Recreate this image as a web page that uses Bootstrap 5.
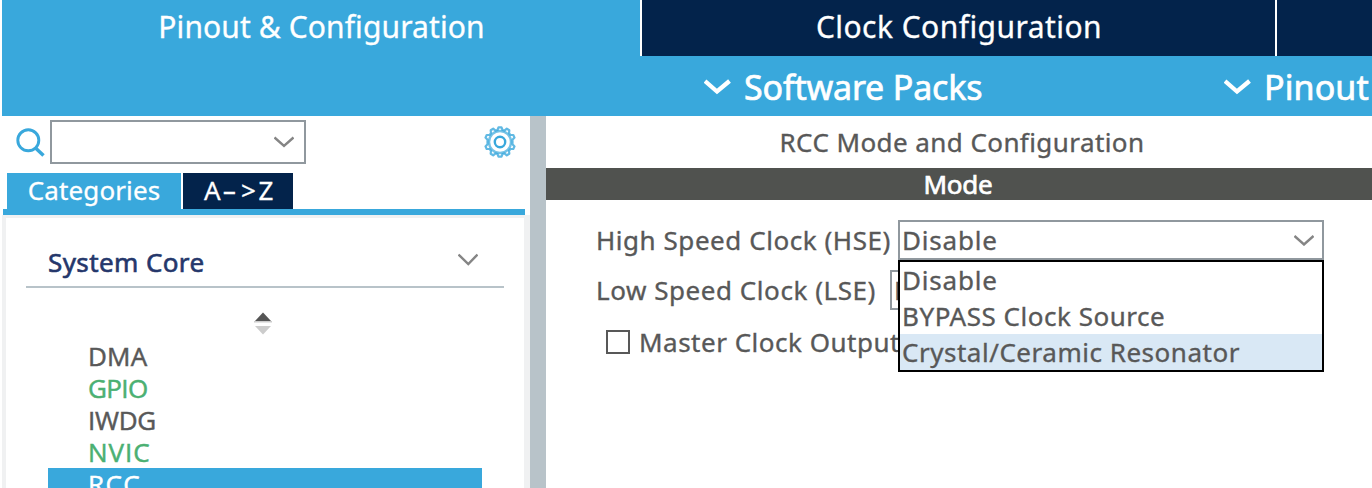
<!DOCTYPE html>
<html lang="en">
<head>
<meta charset="utf-8">
<title>Pinout &amp; Configuration</title>
<link href="https://cdn.jsdelivr.net/npm/bootstrap@5.3.0/dist/css/bootstrap.min.css" rel="stylesheet">
<style>
:root{--sky:#39a8dc;--navy:#03234b;--ink:#585858;--steel:#b8c3c9;--edge:#90989e}
body{height:488px;font-family:"Noto Sans","Open Sans",sans-serif;font-size:26px;line-height:32px;letter-spacing:.55px;color:var(--ink);background:#fff;white-space:nowrap;-webkit-text-stroke:.35px}
svg{display:block;flex:none}
.page{height:488px;padding-left:2px}
.main-tabs{height:56px;font-size:30px;background:var(--navy)}
.main-tab{padding-bottom:2px;padding-left:1px;background:var(--navy);color:#fff;-webkit-text-stroke:.3px}
.main-tab.active{width:638px;background:var(--sky);letter-spacing:.1px}
.main-tab.clock{width:637px;margin-right:-1px;letter-spacing:.45px;border:solid #fff;border-width:0 2px}
.tool-bar{height:60px;background:var(--sky);color:#fff;font-size:34px;-webkit-text-stroke:.7px}
.tool-item{height:60px;padding-top:2px}
.tool-item svg{margin-top:0;margin-right:13px}
.tool-item.packs{margin-left:702px;width:520px;letter-spacing:-.18px}
.tool-item.pins{letter-spacing:.1px}
.side{width:528px}
.splitter{width:16px;background:var(--steel)}
.search-row{height:57px;padding:4px 14px 9px 14px}
.combo{border:2px solid var(--edge);background:#fff}
.search-combo{width:256px;height:44px;margin-left:5px;padding-right:10px}
.cat-tabs{height:36px;padding-left:5px;gap:2px}
.cat-tab{height:36px;padding-bottom:3px;background:var(--navy);color:#fff;-webkit-text-stroke:.3px}
.cat-tab.active{width:174px;background:var(--sky);letter-spacing:.12px}
.cat-tab.az{width:110px;letter-spacing:2.6px;padding-left:4px}
.dash{display:inline-block;transform:scaleX(1.7);margin:0 4.6px 0 2.4px}
.cat-line{height:6px;width:522px;margin-left:1px;background:var(--sky)}
.cat-panel{border:solid #f0f1f2;border-width:3px 6px 0 4px;padding:19px 20px 0}
.group-head{height:51px;border-bottom:2px solid var(--steel);padding:1px 26px 0 22px;color:#25376b;letter-spacing:.4px;-webkit-text-stroke:.6px}
.group-head svg{margin-top:-6px}
.sorter{height:52px;padding-top:24px;padding-right:4px}
.periph{margin:0 22px;font-family:"Open Sans","Noto Sans",sans-serif;-webkit-text-stroke:.5px}
.periph-item{height:32px;padding-left:40px}
.periph-item.ok{color:#4bb072}
.periph-item.picked{background:var(--sky);color:#fff;letter-spacing:1.4px}
.pane-title{height:52px;letter-spacing:.42px;padding-left:6px}
.pane-bar{height:32px;background:#50524f;color:#fff;letter-spacing:-.2px;padding-right:2px;-webkit-text-stroke:.7px}
.form-area{padding:20px 0 0 50px}
.form-stack{width:728px}
.form-line{height:40px}
.select-box{width:426px;height:40px;padding:0 8px 0 2px;letter-spacing:.8px}
.low-speed{width:720px;margin-top:10px}
.master{margin-top:12px;letter-spacing:.5px}
.drop{top:40px;right:0;width:426px;z-index:5;background:#fff;border:2px solid #000;letter-spacing:.52px}
.opt{height:36px;padding-left:2px}
.opt.hot{background:#d9e8f5}
.box{width:24px;height:24px;border:2px solid var(--ink);margin-left:10px;margin-right:9px}
</style>
</head>
<body class="overflow-hidden">
<div class="page d-flex flex-column overflow-hidden">
  <nav class="main-tabs d-flex flex-shrink-0">
    <div class="main-tab active d-flex align-items-center justify-content-center">Pinout &amp; Configuration</div>
    <div class="main-tab clock d-flex align-items-center justify-content-center">Clock Configuration</div>
  </nav>
  <div class="tool-bar d-flex flex-shrink-0">
    <div class="tool-item packs d-flex align-items-center">
      <svg width="27" height="16" viewBox="0 0 27 16" fill="none" stroke="#fff" stroke-width="4.300"><path d="M1 2 13 12.500 25.500 2"/></svg>
      <span>Software Packs</span>
    </div>
    <div class="tool-item pins d-flex align-items-center">
      <svg width="27" height="16" viewBox="0 0 27 16" fill="none" stroke="#fff" stroke-width="4.300"><path d="M1 2 13 12.500 25.500 2"/></svg>
      <span>Pinout</span>
    </div>
  </div>
  <div class="d-flex flex-grow-1">
    <aside class="side d-flex flex-column flex-shrink-0">
      <div class="search-row d-flex align-items-center">
        <svg width="29" height="29" viewBox="0 0 29 29" fill="none" stroke="#39a8dc"><circle cx="12.300" cy="12.300" r="10.500" stroke-width="2.900"/><path d="M19 19.500 27.500 27.500" stroke-width="3.500"/></svg>
        <div class="search-combo combo d-flex align-items-center justify-content-end">
          <svg width="20" height="12" viewBox="0 0 20 12" fill="none" stroke="#858585" stroke-width="2.400"><path d="M.5 1.500 10 10 19.500 1.500"/></svg>
        </div>
        <svg class="ms-auto" width="32" height="32" viewBox="0 0 32 32" fill="none" stroke="#39a8dc"><circle cx="16" cy="16" r="5.200" stroke-width="2.400"/><circle cx="16" cy="16" r="11" stroke-width="2.400" stroke-opacity=".7"/><path stroke-width="2.200" stroke-opacity=".8" stroke-linejoin="round" d="M13.500 4 14.500 1.300h3L18.500 4 20.500 4.600 22.800 2.700 25.300 4.300 25 7.300 26.400 9 29.300 9 30.500 11.600 28.500 13.800 28.500 18.200 30.500 20.400 29.300 23 26.400 23 25 24.700 25.300 27.700 22.800 29.300 20.500 27.400 18.500 28 17.500 30.700h-3L13.500 28 11.500 27.400 9.200 29.300 6.700 27.700 7 24.700 5.600 23 2.700 23 1.500 20.400 3.500 18.200 3.500 13.800 1.500 11.600 2.700 9 5.600 9 7 7.300 6.700 4.300 9.200 2.700 11.500 4.600z"/></svg>
      </div>
      <div class="cat-tabs d-flex">
        <div class="cat-tab active d-flex align-items-center justify-content-center">Categories</div>
        <div class="cat-tab az d-flex align-items-center justify-content-center"><span>A<span class="dash">-</span>&gt;Z</span></div>
      </div>
      <div class="cat-line flex-shrink-0"></div>
      <div class="cat-panel flex-grow-1">
        <div class="group-head d-flex align-items-center justify-content-between">
          <span>System Core</span>
          <svg width="20" height="13" viewBox="0 0 20 13" fill="none" stroke="#858585" stroke-width="2.400"><path d="M.5 1.500 10.300 11 19.500 1.500"/></svg>
        </div>
        <div class="sorter d-flex justify-content-center">
          <svg width="18" height="24" viewBox="0 0 18 24"><path d="M9 .5 17 9H1z" fill="#555"/><path d="M0 9h18v1.500H0z" fill="#ccc"/><path d="M1 14h16L9 22.500z" fill="#ccc"/></svg>
        </div>
        <ul class="periph list-unstyled mb-0">
          <li class="periph-item" style="letter-spacing:.2px">DMA</li>
          <li class="periph-item ok" style="letter-spacing:-.6px">GPIO</li>
          <li class="periph-item" style="letter-spacing:-.3px">IWDG</li>
          <li class="periph-item ok" style="letter-spacing:1px">NVIC</li>
          <li class="periph-item picked">RCC</li>
        </ul>
      </div>
    </aside>
    <div class="splitter flex-shrink-0"></div>
    <main class="flex-grow-1">
      <div class="pane-title d-flex align-items-center justify-content-center">RCC Mode and Configuration</div>
      <div class="pane-bar d-flex align-items-center justify-content-center">Mode</div>
      <div class="form-area">
        <div class="form-stack position-relative">
          <div class="form-line d-flex align-items-center justify-content-between">
            <span>High Speed Clock (HSE)</span>
            <div class="select-box combo d-flex align-items-center justify-content-between">Disable
              <svg width="20" height="12" viewBox="0 0 20 12" fill="none" stroke="#858585" stroke-width="2.400"><path d="M.5 2 10 10.500 19.500 2"/></svg>
            </div>
          </div>
          <div class="drop position-absolute">
            <div class="opt d-flex align-items-center" style="letter-spacing:.8px">Disable</div>
            <div class="opt d-flex align-items-center">BYPASS Clock Source</div>
            <div class="opt hot d-flex align-items-center">Crystal/Ceramic Resonator</div>
          </div>
          <div class="form-line low-speed d-flex align-items-center justify-content-between">
            <span>Low Speed Clock (LSE)</span>
            <div class="select-box combo d-flex align-items-center">Disable</div>
          </div>
          <div class="form-line master d-flex align-items-center">
            <span class="box"></span>Master Clock Output
          </div>
        </div>
      </div>
    </main>
  </div>
</div>
<script src="https://cdn.jsdelivr.net/npm/bootstrap@5.3.0/dist/js/bootstrap.bundle.min.js"></script>
</body>
</html>
